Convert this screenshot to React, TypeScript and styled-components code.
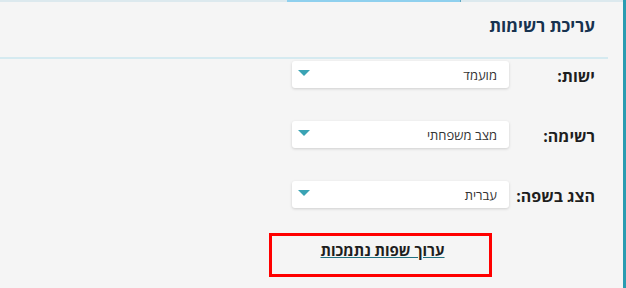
import styled, { createGlobalStyle } from 'styled-components';

const GlobalStyle = createGlobalStyle`
  html, body {
    margin: 0;
    padding: 0;
    background: #f5f5f5;
  }
  body {
    font-family: "Open Sans", "Liberation Sans", "DejaVu Sans", sans-serif;
  }
`;

const fields = [
  { label: 'ישות:', value: 'מועמד' },
  { label: 'רשימה:', value: 'מצב משפחתי' },
  { label: 'הצג בשפה:', value: 'עברית' },
];

function App() {
  return (
    <>
      <GlobalStyle />
      <StyledRoot>
        <StyledTabStrip>
          <StyledActiveTab />
        </StyledTabStrip>
        <StyledHeader>
          <h2>עריכת רשימות</h2>
        </StyledHeader>
        <StyledForm>
          {fields.map((f) => (
            <StyledRow key={f.label}>
              <StyledLabel>{f.label}</StyledLabel>
              <StyledSelect>
                <span>{f.value}</span>
                <StyledCaret />
              </StyledSelect>
            </StyledRow>
          ))}
        </StyledForm>
        <StyledLinkRow>
          <StyledHighlight>
            <a href="#">ערוך שפות נתמכות</a>
          </StyledHighlight>
        </StyledLinkRow>
      </StyledRoot>
    </>
  );
}

const StyledRoot = styled.main`
  direction: rtl;
  width: 626px;
  height: 288px;
  box-sizing: border-box;
  border-right: 3px solid #2a9cb1;
  overflow: hidden;
`;

const StyledTabStrip = styled.div`
  direction: ltr;
  height: 2px;
  background: #dce9ee;
  display: flex;
`;

const StyledActiveTab = styled.div`
  margin-left: 287px;
  width: 173px;
  height: 2px;
  background: #8fd0ee;
  border-right: 1px solid #5fa9c4;
`;

const StyledHeader = styled.header`
  height: 55px;
  margin-right: 15px;
  padding-right: 13px;
  border-bottom: 2px solid #d5eaf0;
  display: flex;
  align-items: center;

  & > h2 {
    margin: 0;
    font-size: 17px;
    font-weight: 700;
    color: #17324f;
    padding-bottom: 8px;
  }
`;

const StyledForm = styled.div`
  padding: 2px 28px 0 0;
  display: flex;
  flex-direction: column;
  gap: 33px;
`;

const StyledRow = styled.div`
  display: flex;
  align-items: center;
  gap: 10px;
`;

const StyledLabel = styled.label`
  width: 76px;
  flex-shrink: 0;
  white-space: nowrap;
  font-size: 16px;
  font-weight: 700;
  color: #1e1e1e;
  padding-top: 2px;
`;

const StyledSelect = styled.div`
  width: 217px;
  height: 27px;
  box-sizing: border-box;
  background: #ffffff;
  border-radius: 3px;
  box-shadow: 0 1px 3px rgba(0, 0, 0, 0.16);
  display: flex;
  align-items: center;
  justify-content: space-between;
  padding: 0 12px 0 6px;
  font-size: 13px;
  color: #333333;
`;

const StyledCaret = styled.i`
  width: 0;
  height: 0;
  border-left: 6px solid transparent;
  border-right: 6px solid transparent;
  border-top: 6px solid #3aa3b4;
  margin-top: -4px;
`;

const StyledLinkRow = styled.div`
  display: flex;
  padding: 25px 131px 0 0;
`;

const StyledHighlight = styled.div`
  width: 223px;
  height: 44px;
  box-sizing: border-box;
  border: 3px solid #ff0000;
  display: flex;
  justify-content: center;
  padding-top: 4px;

  & > a {
    font-size: 15px;
    font-weight: 700;
    color: #1e1e1e;
    text-decoration: underline;
    text-decoration-color: #1f6f80;
    margin-left: 4px;
  }
`;

export default App;
